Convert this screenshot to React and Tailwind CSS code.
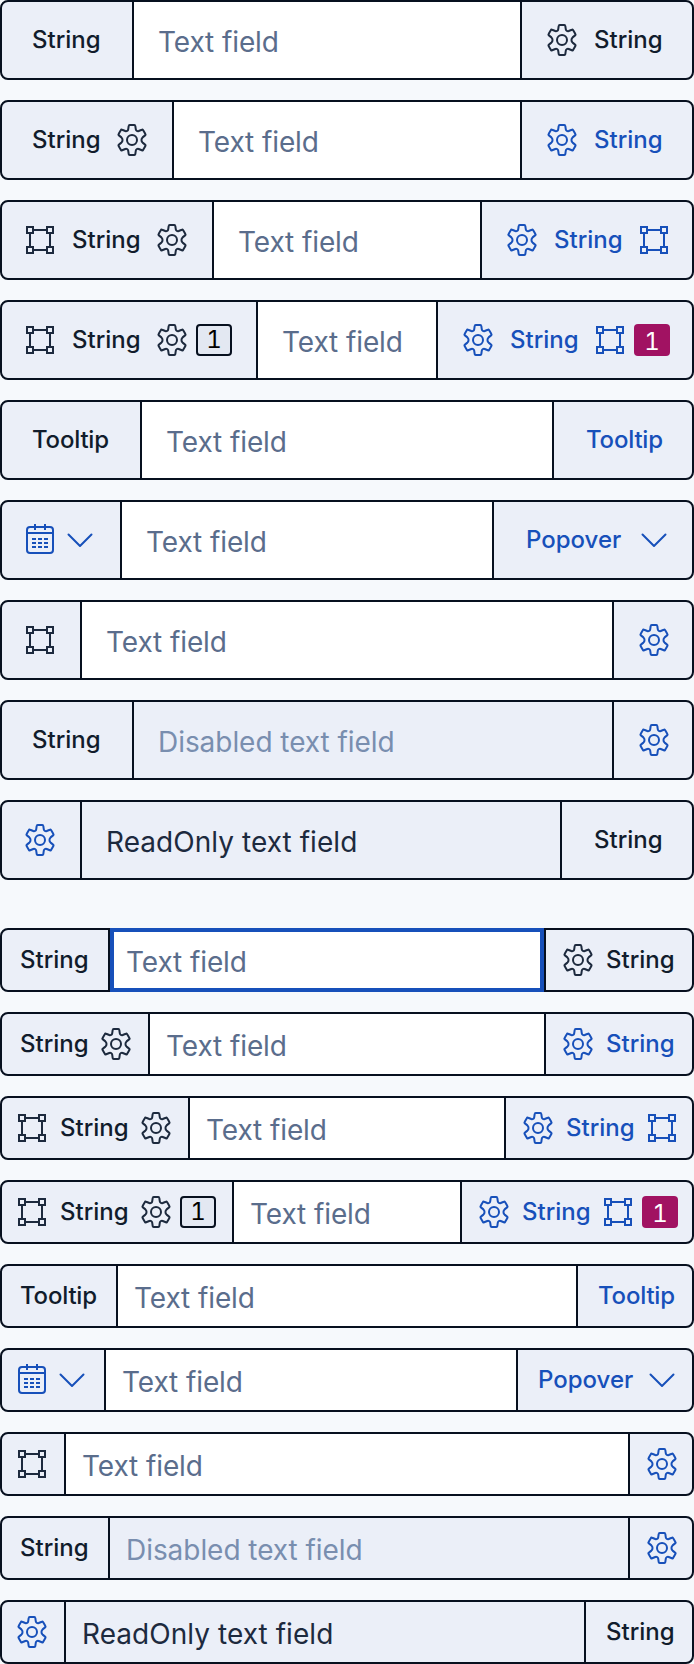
import React from 'react';

function Gear() {
  return (
    <svg className="h-8 w-8 shrink-0" viewBox="0 0 32 32" fill="none" stroke="currentColor" strokeWidth="2" strokeLinejoin="round">
      <circle cx="16" cy="16" r="5" />
      <path d="M13.7 1h4.6q.9 0 1 .9l.5 3.4c.2 1.5 1.6 2.1 2.9 1.7l3.2-1.3q.9-.4 1.3.5l2.2 3.8q.5.8-.3 1.4l-2.5 2c-1.500 1.300-1.500 3.900 0 5.200l2.500 2q.8.6.3 1.400l-2.200 3.800q-.4.9-1.300.5l-3.200-1.300c-1.300-.4-2.700.2-2.900 1.700l-.5 3.400q-.1.9-1 .9h-4.600q-.9 0-1-.9l-.5-3.400c-.2-1.500-1.600-2.100-2.900-1.700l-3.200 1.300q-.9.400-1.300-.5l-2.200-3.800q-.5-.8.3-1.400l2.500-2c1.500-1.300 1.500-3.900 0-5.200l-2.500-2q-.8-.6-.3-1.400l2.200-3.800q.4-.9 1.300-.5l3.200 1.300c1.300.4 2.700-.2 2.900-1.700l.5-3.400q.1-.9 1-.9z" />
    </svg>
  );
}

function Vector() {
  return (
    <svg className="h-8 w-8 shrink-0" viewBox="0 0 32 32" fill="none" stroke="currentColor" strokeWidth="2">
      <path d="M3 3h6v6H3zM23 3h6v6h-6zM3 23h6v6H3zM23 23h6v6h-6zM9 6h14M9 26h14M6 9v14M26 9v14" />
    </svg>
  );
}

function Calendar() {
  return (
    <svg className="h-8 w-8 shrink-0" viewBox="0 0 32 32" fill="none" stroke="currentColor" strokeWidth="2">
      <rect x="3" y="3" width="26" height="26" rx="3" />
      <path d="M11 0v6M21 0v6M3 9h26M8 15h4M14 15h4M20 15h4M8 19h4M14 19h4M20 19h4M8 23h4M14 23h4M20 23h4" />
    </svg>
  );
}

function Chevron() {
  return (
    <svg className="h-8 w-8 shrink-0" viewBox="0 0 32 32" fill="none" stroke="currentColor" strokeWidth="2" strokeLinecap="round" strokeLinejoin="round">
      <path d="M4.500 10.500L16 22L27.500 10.500" />
    </svg>
  );
}

function Badge({ accent }) {
  return accent ? (
    <span className="flex h-8 w-9 shrink-0 items-center justify-center rounded-[4px] bg-[#a11262] pt-1 text-2xl leading-7 text-white tabular-nums">1</span>
  ) : (
    <span className="flex h-8 w-9 shrink-0 items-center justify-center rounded-[4px] border-2 border-[#07101f] bg-[#e3e8f2] text-2xl font-normal leading-7 text-black tabular-nums">1</span>
  );
}

const ICONS = { gear: Gear, vector: Vector, calendar: Calendar, chevron: Chevron };
const LABEL_WIDTHS = { String: 'w-[68px]', Tooltip: 'w-[76px] tracking-[-0.2px]', Popover: 'w-[96px]' };

function Item({ name, compact, blue }) {
  if (name === 'badge') return <Badge />;
  if (name === 'accent') return <Badge accent />;
  const Icon = ICONS[name];
  if (Icon) return <Icon />;
  return (
    <span className={`${compact ? 'mx-1' : 'mx-2'} ${LABEL_WIDTHS[name]} ${blue ? '' : 'text-[#111c2c]'} whitespace-nowrap text-2xl font-medium leading-8`}>
      {name}
    </span>
  );
}

function Addon({ items, side, blue, compact }) {
  const edge = side === 'left'
    ? (compact ? 'pl-[14px] pr-4 border-r-2' : 'pl-[22px] pr-6 border-r-2')
    : (compact ? 'pl-4 pr-[14px] border-l-2' : 'pl-6 pr-[22px] border-l-2');
  return (
    <div className={`flex shrink-0 items-center gap-2 border-[#07101f] ${edge} ${blue ? 'text-[#1750ba]' : 'text-[#1d2a3e]'}`}>
      {items.map((name, i) => <Item key={i} name={name} compact={compact} blue={blue} />)}
    </div>
  );
}

const FIELD_STYLES = {
  normal: 'bg-white text-[#5a6d8c] tracking-[-0.1px]',
  disabled: 'text-[#798eaf] tracking-[-0.05px]',
  readonly: 'text-[#1d2a3e] tracking-[0.05px]',
};

function FormRow({ row, compact, focused }) {
  const { left, right, leftBlue, rightBlue, state = 'normal', text = 'Text field' } = row;
  const frame = focused ? '-my-[2px] border-4 border-[#1750ba] pl-3' : compact ? 'pl-4' : 'pl-6';
  return (
    <div className={`flex rounded-[8px] border-2 border-[#07101f] bg-[#ebeff8] ${compact ? 'h-16' : 'h-20'}`}>
      <Addon items={left} side="left" blue={leftBlue} compact={compact} />
      <div className={`flex min-w-0 flex-1 items-center ${FIELD_STYLES[state]} ${frame}`}>
        <span className="mt-1 whitespace-nowrap text-[28px] leading-8">{text}</span>
      </div>
      <Addon items={right} side="right" blue={rightBlue} compact={compact} />
    </div>
  );
}

const ROWS = [
  { left: ['String'], right: ['gear', 'String'] },
  { left: ['String', 'gear'], right: ['gear', 'String'], rightBlue: true },
  { left: ['vector', 'String', 'gear'], right: ['gear', 'String', 'vector'], rightBlue: true },
  { left: ['vector', 'String', 'gear', 'badge'], right: ['gear', 'String', 'vector', 'accent'], rightBlue: true },
  { left: ['Tooltip'], right: ['Tooltip'], rightBlue: true },
  { left: ['calendar', 'chevron'], right: ['Popover', 'chevron'], leftBlue: true, rightBlue: true },
  { left: ['vector'], right: ['gear'], rightBlue: true },
  { left: ['String'], right: ['gear'], rightBlue: true, state: 'disabled', text: 'Disabled text field' },
  { left: ['gear'], right: ['String'], leftBlue: true, state: 'readonly', text: 'ReadOnly text field' },
];

export default function App() {
  return (
    <div className="flex h-[1664px] w-[694px] flex-col gap-12 bg-[#f6f9fc] font-['Inter',sans-serif]">
      <div className="flex flex-col gap-5">
        {ROWS.map((row, i) => <FormRow key={i} row={row} />)}
      </div>
      <div className="flex flex-col gap-5">
        {ROWS.map((row, i) => <FormRow key={i} row={row} compact focused={i === 0} />)}
      </div>
    </div>
  );
}
